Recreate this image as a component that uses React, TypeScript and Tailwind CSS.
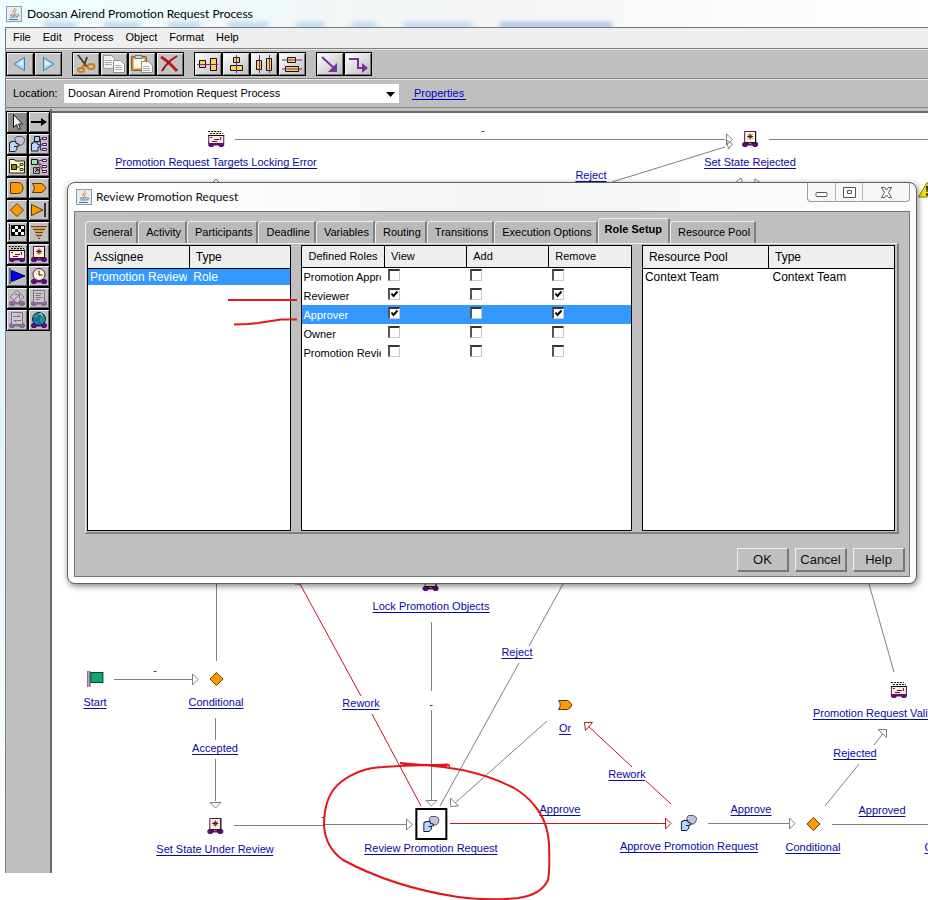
import type { ReactNode } from "react";

const Svg = ({ children }: { children: ReactNode }) => (
  <svg width="18" height="18" viewBox="0 0 18 18" fill="none" aria-hidden="true">
    {children}
  </svg>
);

const JavaIcon = () => (
  <svg width="16" height="16" viewBox="0 0 16 16" fill="none" aria-hidden="true" className="shrink-0">
    <rect x="0.5" y="0.5" width="15" height="15" fill="#e6edf3" stroke="#8f9ba8" />
    <path d="M9 2C9 4 6 4.500 7 7M10.500 4C8 5 9.500 6 8.500 8" stroke="#d97b35" />
    <path d="M4 9h6.500M4.500 11h5M3 13.500h9M11 8.500c3 0 2 2.500-1 2.500" stroke="#4e7698" />
  </svg>
);

const Wheels = () => (
  <path d="M1 13.500 2.500 12h4L8 14h2l1.500-2h4l1.500 1.500v2L15.500 17h-3L11 15.500H7L5.500 17h-3L1 15.500z" fill="#5b0f73" />
);

const Robot = () => (
  <Svg>
    <Wheels />
    <path d="M3.500 1.500h11v11h-11z" fill="#fff6c4" stroke="#5b0f73" />
    <path d="M14.500 1v12H4" stroke="#1a0620" />
    <path d="M9 3.500v6M6 6.500h6M7 4.500l4 4M11 4.500l-4 4" stroke="#45104f" />
  </Svg>
);

const Mail = () => (
  <Svg>
    <Wheels />
    <path d="M1 1.500h13M3 3.500h13" stroke="#111" strokeDasharray="2 1" />
    <rect x="1.500" y="5.500" width="15" height="8" fill="#fff0d0" stroke="#5b0f73" />
    <path d="M1 5.500h16" stroke="#000" />
    <path d="M3 7.500h2M13.500 7v3M7 9.500h5M5 11.500h5" stroke="#5b0f73" />
  </Svg>
);

const People = () => (
  <Svg>
    <path d="M7 3.500 8.500 1.500h5l3 2v2l-1 3-2 1.500h-3L7 8z" fill="#c3c3dd" stroke="#55556e" />
    <path d="M1.500 7.500h1.500v-1h5v2l3 .500v2H9v3l-2 2.500H1.500z" fill="#b9d5f7" stroke="#10243f" />
    <path d="M6 11.500h3" stroke="#10243f" />
  </Svg>
);

const Diamond = () => (
  <Svg>
    <path d="M9 2.500 15.500 9 9 15.500 2.500 9z" fill="#ff9900" stroke="#6b3f00" />
  </Svg>
);

const OrGate = () => (
  <Svg>
    <path d="M2.500 4.500h9q3 1.500 4.500 4.500-1.500 3-4.500 4.500h-9q3.500-4.500 0-9z" fill="#ff9900" stroke="#5c3700" />
  </Svg>
);

const AndGate = () => (
  <Svg>
    <path d="M2.500 3.500h8q4.500 1 4.500 5.500t-4.500 5.500h-8z" fill="#ff9900" stroke="#5c3700" />
  </Svg>
);

const StartFlag = () => (
  <Svg>
    <path d="M1.500 1v16M3.500 1v16" stroke="#3e1b55" />
    <rect x="4.500" y="2.500" width="12" height="10" fill="#0aa878" stroke="#063c2c" />
  </Svg>
);

const FadedRobot = ({ children }: { children: ReactNode }) => (
  <Svg>
    <g opacity="0.5">
      <Wheels />
      {children}
    </g>
  </Svg>
);

const paletteItems: { name: string; icon: ReactNode }[] = [
  { name: "Select", icon: <Svg><path d="M5.500 1.500v13l3-3 2 5 2-1-2-4.500h4z" fill="#f4f4f4" stroke="#111" /></Svg> },
  { name: "Link", icon: <Svg><path d="M1 9h11" stroke="#000" strokeWidth="2" /><path d="M11 5l6 4-6 4z" fill="#000" /></Svg> },
  { name: "Activity", icon: <People /> },
  {
    name: "Ad hoc",
    icon: (
      <Svg>
        <path d="M8 4h4M10.500 4v11h2M10 9.500h3" stroke="#5b2a78" />
        <path d="M12.500 2.500h4v2h-4zM12.500 8.500h4v2h-4zM12.500 13.500h4v2h-4z" fill="#eee" stroke="#5b0f73" />
        <path d="M4.500 1.500h5v5h-5z" fill="#9fe0b9" stroke="#113" />
        <path d="M1.500 8.500H3V7h4v2l3 1v2H8v4H1.500z" fill="#b9d5f7" stroke="#10243f" />
      </Svg>
    ),
  },
  {
    name: "Block",
    icon: (
      <Svg>
        <path d="M1.500 2.500h5l1 1.500h9v12h-15z" fill="#fff3c8" stroke="#221" />
        <path d="M3.500 7.500h5v5h-5z" fill="#8a7a2c" stroke="#110" />
        <path d="M9 10h3M12 6.500h3v2h-3zM12 11.500h3v2h-3z" stroke="#431" />
      </Svg>
    ),
  },
  {
    name: "Proxy",
    icon: (
      <Svg>
        <path d="M8 4l5-1M8 5l5 4M8 6l5 8" stroke="#5b2a78" />
        <path d="M1.500 2.500h6v5h-6z" fill="#9fe0b9" stroke="#111" />
        <path d="M12.500 2.500h4v2h-4zM12.500 8.500h4v2h-4zM12.500 13.500h4v2h-4z" fill="#eee" stroke="#5b0f73" />
        <path d="M3.500 10.500h6v6h-6z" fill="#bbb" stroke="#333" />
        <path d="M5 15l3-3M5.500 12H8v2.500" stroke="#000" />
      </Svg>
    ),
  },
  { name: "And", icon: <AndGate /> },
  { name: "Or", icon: <OrGate /> },
  { name: "Conditional", icon: <Diamond /> },
  { name: "Threshold", icon: <Svg><path d="M1.500 3.500 13 9 1.500 14.500z" fill="#ff9900" stroke="#5c3700" /><path d="M15 2v14" stroke="#333" strokeWidth="2" /></Svg> },
  {
    name: "End",
    icon: (
      <Svg>
        <path d="M1.500 1v16" stroke="#222" />
        <path d="M3.500 2.500h13v10h-13z" fill="#fff" stroke="#000" />
        <path d="M4 3h3v3H4zM10 3h3v3h-3zM7 6h3v3H7zM13 6h3v3h-3zM4 9h3v3H4zM10 9h3v3h-3z" fill="#000" />
      </Svg>
    ),
  },
  { name: "Ground", icon: <Svg><path d="M1 3.500h16M3 6.500h12M5 9.500h8M6 12.500h6M8 15.500h2" stroke="#7a3c00" /><path d="M2 5h14M4 8h10M6 11h6M7 14h4" stroke="#d18b33" /></Svg> },
  { name: "Notification robot", icon: <Mail /> },
  { name: "Method robot", icon: <Robot /> },
  { name: "Milestone", icon: <Svg><path d="M2 1v16" stroke="#001b55" /><path d="M3.500 3.500v11L17 9z" fill="#0000ee" stroke="#000050" /></Svg> },
  {
    name: "Timer robot",
    icon: (
      <Svg>
        <Wheels />
        <circle cx="9" cy="7.500" r="6" fill="#fff3d0" stroke="#45104f" />
        <path d="M9 3.500V8h3.500" stroke="#111" />
      </Svg>
    ),
  },
  {
    name: "Launch robot",
    icon: (
      <FadedRobot>
        <path d="M9 1.500 16 8l-7 6-7-6z" fill="#ddd0dd" stroke="#5b0f73" />
        <path d="M6 11l5-5M7 5.500h4.500V10" stroke="#333" />
      </FadedRobot>
    ),
  },
  {
    name: "Script robot",
    icon: (
      <FadedRobot>
        <path d="M3.500 1.500h11v12h-11z" fill="#ddd0dd" stroke="#5b0f73" />
        <path d="M5.500 4.500h7M5.500 6.500h5M5.500 8.500h7M5.500 10.500h4" stroke="#333" />
      </FadedRobot>
    ),
  },
  {
    name: "Sync robot",
    icon: (
      <FadedRobot>
        <path d="M3.500 1.500h11v12h-11z" fill="#ddd0dd" stroke="#5b0f73" />
        <path d="M5 5.500h7l-2-2M13 9.500H6l2 2" stroke="#333" />
      </FadedRobot>
    ),
  },
  {
    name: "URL robot",
    icon: (
      <Svg>
        <Wheels />
        <circle cx="9" cy="8" r="6.500" fill="#1668c7" stroke="#06244d" />
        <path d="M4 4.500 8 2l1 2-2 3H3zM10 6l4-1 1 4-3 4-2-3zM4 10l3 1v3z" fill="#22a35a" />
        <path d="M9 3l3-.500M11 4l2 .500" stroke="#d6efff" />
      </Svg>
    ),
  },
];

const ToolSvg = ({ children }: { children: ReactNode }) => (
  <svg width="24" height="20" viewBox="0 0 24 20" fill="none" aria-hidden="true">
    {children}
  </svg>
);

const toolbarGroups: { name: string; light?: boolean; icon: ReactNode }[][] = [
  [
    { name: "Back", icon: <ToolSvg><path d="M16.500 3.500v13L6 10z" fill="#a5ddf7" stroke="#2d88b8" /><path d="M15 6v6l-5-2z" fill="#e2f6ff" /></ToolSvg> },
    { name: "Forward", icon: <ToolSvg><path d="M7.500 3.500v13L18 10z" fill="#a5ddf7" stroke="#2d88b8" /><path d="M9 6v6l5-2z" fill="#e2f6ff" /></ToolSvg> },
  ],
  [
    {
      name: "Cut",
      icon: (
        <ToolSvg>
          <path d="M4 1l9 12M13 3l-3 9" stroke="#4a4038" strokeWidth="2" />
          <path d="M10 10l-2 5" stroke="#c87412" strokeWidth="2" />
          <ellipse cx="7" cy="16" rx="3" ry="2" stroke="#d07d14" strokeWidth="2" />
          <ellipse cx="17" cy="12.500" rx="3.500" ry="2.500" stroke="#d07d14" strokeWidth="2" />
        </ToolSvg>
      ),
    },
    {
      name: "Copy",
      icon: (
        <ToolSvg>
          <path d="M1.500 1.500h8l3 3v10h-11z" fill="#f0f0ee" stroke="#999" />
          <path d="M3 6.500h7M3 8.500h7M3 10.500h7" stroke="#a9a9a9" />
          <path d="M11.500 6.500h7l4 4v8h-11z" fill="#fafaf8" stroke="#8c8c88" />
          <path d="M13 11.500h6M13 13.500h7M13 15.500h7" stroke="#a9a9a9" />
        </ToolSvg>
      ),
    },
    {
      name: "Paste",
      icon: (
        <ToolSvg>
          <rect x="1.500" y="2.500" width="15" height="14" rx="1" fill="#c98b34" stroke="#8d5b17" />
          <path d="M3.500 4.500h11v10h-11z" fill="#fdf7e6" />
          <path d="M5 1.500h7v3H5z" fill="#d7d0c0" stroke="#776" />
          <path d="M11.500 7.500h7l4 4v7h-11z" fill="#fafaf8" stroke="#8c8c88" />
          <path d="M13 12.500h6M13 14.500h7M13 16.500h7" stroke="#a9a9a9" />
        </ToolSvg>
      ),
    },
    { name: "Delete", icon: <ToolSvg><path d="M3 3q6 3 16 14" stroke="#c01818" strokeWidth="3" /><path d="M19 2Q9 8 4 17" stroke="#a50f0f" strokeWidth="2" /></ToolSvg> },
  ],
  [
    { name: "Align middle", light: true, icon: <ToolSvg><path d="M3.500 6.500h6v7h-6zM14.500 4.500h6v12h-6z" fill="#ffd24d" stroke="#111" /><path d="M1 10.500h21" stroke="#7a1f9e" /></ToolSvg> },
    { name: "Align center", light: true, icon: <ToolSvg><path d="M9.500 3.500h6v5h-6zM6.500 11.500h12v5h-12z" fill="#ffd24d" stroke="#111" /><path d="M12.500 1v18" stroke="#7a1f9e" /></ToolSvg> },
    { name: "Distribute across", light: true, icon: <ToolSvg><path d="M4.500 6.500h5v9h-5zM14.500 4.500h5v12h-5z" fill="#ffd24d" stroke="#111" /><path d="M7.500 1v18M17.500 1v18" stroke="#7a1f9e" /></ToolSvg> },
    { name: "Distribute down", light: true, icon: <ToolSvg><path d="M7.500 3.500h8v5h-8zM5.500 12.500h13v5h-13z" fill="#ffd24d" stroke="#111" /><path d="M2 6h20M2 15h20" stroke="#7a1f9e" /></ToolSvg> },
  ],
  [
    { name: "Straight link", light: true, icon: <ToolSvg><path d="M4 3l13 12" stroke="#7b2fa5" strokeWidth="2" /><path d="M19 9v9h-9z" fill="#7b2fa5" /></ToolSvg> },
    { name: "Stepped link", light: true, icon: <ToolSvg><path d="M3 5h9v9h5" stroke="#7b2fa5" strokeWidth="2" /><path d="M16 9l6 5-6 5z" fill="#7b2fa5" /></ToolSvg> },
  ],
];

const menus = ["File", "Edit", "Process", "Object", "Format", "Help"];

// x is the centre of the node, y the top of its icon
const nodes: { x: number; y: number; label: string; icon: ReactNode; selected?: boolean }[] = [
  { x: 164, y: 17, label: "Promotion Request Targets Locking Error", icon: <Mail /> },
  { x: 698, y: 17, label: "Set State Rejected", icon: <Robot /> },
  { x: 379, y: 461, label: "Lock Promotion Objects", icon: <Robot /> },
  { x: 43, y: 557, label: "Start", icon: <StartFlag /> },
  { x: 164, y: 557, label: "Conditional", icon: <Diamond /> },
  { x: 163, y: 704, label: "Set State Under Review", icon: <Robot /> },
  { x: 379, y: 695, label: "Review Promotion Request", icon: <People />, selected: true },
  { x: 513, y: 583, label: "Or", icon: <OrGate /> },
  { x: 637, y: 701, label: "Approve Promotion Request", icon: <People /> },
  { x: 761, y: 702, label: "Conditional", icon: <Diamond /> },
  { x: 847, y: 568, label: "Promotion Request Validation Error", icon: <Mail /> },
  { x: 900, y: 702, label: "Conditional", icon: <Diamond /> },
];

const edgeLabels: { x: number; y: number; label: string }[] = [
  { x: 431, y: 11, label: "-" },
  { x: 539, y: 56, label: "Reject" },
  { x: 465, y: 533, label: "Reject" },
  { x: 309, y: 584, label: "Rework" },
  { x: 379, y: 585, label: "-" },
  { x: 103, y: 551, label: "-" },
  { x: 271, y: 697, label: "-" },
  { x: 446, y: 660, label: "-" },
  { x: 163, y: 629, label: "Accepted" },
  { x: 508, y: 690, label: "Approve" },
  { x: 575, y: 655, label: "Rework" },
  { x: 699, y: 690, label: "Approve" },
  { x: 803, y: 634, label: "Rejected" },
  { x: 830, y: 691, label: "Approved" },
];

const Edges = () => (
  <svg className="absolute top-0 left-0" width="876" height="760" viewBox="52 113 876 760" fill="none" aria-hidden="true">
    <g stroke="#808080">
      <path d="M235 139.500h490M769 139.500h159M612 182l113-35" />
      <path d="M216.500 583v78M114 679.500h78M215.500 718v22M215.500 759v42M234 825.500h90M324 824.500h82" />
      <path d="M431.500 622v69M431.500 710v90M563 584l-34 62M519 663 440 806M547 721l-92 82" />
      <path d="M708 823.500h81M832 824.500h96M825 806l34-42M874 745l11-14M869 584l25 88" />
    </g>
    <g stroke="#808080">
      <path d="M726.500 134v11l6-5.500zM726.500 140l2 9 4-5zM210 185l6-6 6 6M735 183l6-5 2 6M754 185l1-6 6 4" />
      <path d="M192.500 674v11l5.500-5.500zM210 802.500h11l-5.500 5.500zM406.500 819v11l6-5.500zM426 800.500h11l-5.500 5.500z" fill="#fff" />
      <path d="M450.500 798v8.500l8-.500zM789.500 818v11l5.500-5.500zM878 729.500h8.500v8z" fill="#fff" />
    </g>
    <g stroke="#c01722">
      <path d="M300 584l61 112M372 714l49 92M450 823.500h216M671 804l-25-23M632 767l-46-43" />
      <path d="M665.500 818v11l5.500-5.500zM584.500 722.500h8l-7 8zM295 584h6l-2-3z" fill="#fff" />
    </g>
  </svg>
);

const LabelLink = ({ children }: { children: ReactNode }) => (
  <a href="#" className="block border-b border-[#0a0aa0] text-[11px] leading-3 whitespace-nowrap text-[#0a0aa0]">
    {children}
  </a>
);

const Check = ({ label, checked }: { label: string; checked: boolean }) => (
  <span className="grid size-3">
    <input
      type="checkbox"
      aria-label={label}
      defaultChecked={checked}
      className="peer col-start-1 row-start-1 size-3 appearance-none border border-t-2 border-l-2 border-[#c8c8c8] border-t-[#333] border-l-[#555] bg-white"
    />
    <svg viewBox="0 0 12 12" className="pointer-events-none invisible col-start-1 row-start-1 peer-checked:visible" fill="none" aria-hidden="true">
      <path d="M3.500 5.500 5.500 8l4-4.500" stroke="#000" strokeWidth="2" />
    </svg>
  </span>
);

const roles = [
  { name: "Promotion Approvers", view: false, add: false, remove: false },
  { name: "Reviewer", view: true, add: false, remove: true },
  { name: "Approver", view: true, add: false, remove: true, selected: true },
  { name: "Owner", view: false, add: false, remove: false },
  { name: "Promotion Reviewers", view: false, add: false, remove: false },
];

const tabs = [
  "General",
  "Activity",
  "Participants",
  "Deadline",
  "Variables",
  "Routing",
  "Transitions",
  "Execution Options",
  "Role Setup",
  "Resource Pool",
];

const headCell = "border-b border-black bg-[#eee] text-left font-normal pl-1.5";

const Dialog = () => (
  <section
    role="dialog"
    aria-label="Review Promotion Request"
    className="absolute top-[69px] right-[11px] left-[15px] rounded-lg border border-[#606060] bg-[#fbfcfc] px-1.5 pb-1.5 shadow-[1px_2px_6px_rgba(0,0,0,0.5)]"
  >
    <div className="flex h-7 items-start justify-between bg-linear-to-r from-white via-[#f4f5f5] to-[#fbfcfc] pl-0.5">
      <div className="flex h-7 items-center gap-1">
        <JavaIcon />
        <h2 className="font-[Lato,sans-serif] text-[12px] text-[#111]">Review Promotion Request</h2>
      </div>
      <div className="flex h-[19px] rounded-b border border-t-0 border-[#9a9a9a] bg-[#f6f7f7]">
        <button aria-label="Minimize" className="flex w-7 items-center justify-center border-r border-[#b5b5b5]">
          <svg width="13" height="13" viewBox="0 0 13 13" fill="none"><rect x="1" y="6.500" width="11" height="4" rx="1" fill="#fff" stroke="#555" /></svg>
        </button>
        <button aria-label="Maximize" className="flex w-[27px] items-center justify-center border-r border-[#b5b5b5]">
          <svg width="13" height="13" viewBox="0 0 13 13" fill="none"><path d="M.5 1.500h12v10H.5zM4.500 4.500h4v3h-4z" fill="#fff" stroke="#555" /></svg>
        </button>
        <button aria-label="Close" className="flex w-[46px] items-center justify-center">
          <svg width="13" height="13" viewBox="0 0 13 13" fill="none"><path d="M1.500 1.500h3l2 2.500 2-2.500h3L8.500 6.500l3 5h-3l-2-2.500-2 2.500h-3l3-5z" fill="#fff" stroke="#555" /></svg>
        </button>
      </div>
    </div>

    <div className="border border-[#777] bg-[#bfbfbf] px-2.5 pt-1.5">
      <div role="tablist" className="flex items-end">
        {tabs.map((tab) =>
          tab === "Role Setup" ? (
            <button key={tab} role="tab" aria-selected="true" className="h-[25px] rounded-tl border-t border-r-2 border-l border-[#eee] border-r-[#808080] px-1.5 pb-1 text-[11px] font-bold whitespace-nowrap">
              {tab}
            </button>
          ) : (
            <button key={tab} role="tab" aria-selected="false" className="h-[22px] rounded-tl border-t border-r-2 border-l border-[#eee] border-r-[#808080] bg-[#bababa] pr-1 pl-[7px] text-[11px] whitespace-nowrap">
              {tab}
            </button>
          ),
        )}
      </div>
      <div className="flex h-[291px] gap-2.5 border-t border-r-2 border-b-2 border-l border-[#eee] border-r-[#808080] border-b-[#808080] p-px">
        <div className="flex-[204] border border-black bg-white">
          <table className="w-full table-fixed border-collapse text-[12px]">
            <thead>
              <tr className="h-[22px]">
                <th className={`${headCell} w-1/2 border-r`}>Assignee</th>
                <th className={headCell}>Type</th>
              </tr>
            </thead>
            <tbody>
              <tr className="h-4 bg-[#3399ff] leading-4 text-white">
                <td className="pl-0.5">
                  <div className="w-[97px] overflow-hidden whitespace-nowrap">Promotion Reviewers</div>
                </td>
                <td className="pl-1">Role</td>
              </tr>
            </tbody>
          </table>
        </div>
        <div className="flex-[331] border border-black bg-white">
          <table className="w-full table-fixed border-collapse text-[11px]">
            <thead>
              <tr className="h-[21px]">
                <th className={`${headCell} w-1/4 border-r`}>Defined Roles</th>
                <th className={`${headCell} w-1/4 border-r`}>View</th>
                <th className={`${headCell} w-1/4 border-r`}>Add</th>
                <th className={`${headCell} w-1/4`}>Remove</th>
              </tr>
            </thead>
            <tbody>
              {roles.map((role) => (
                <tr key={role.name} className={role.selected ? "h-[19px] bg-[#3399ff] text-white" : "h-[19px]"}>
                  <td className="pl-px">
                    <div className="w-[78px] overflow-hidden leading-4 whitespace-nowrap">{role.name}</div>
                  </td>
                  <td className="pb-1 pl-[3px]"><Check label={`${role.name} view`} checked={role.view} /></td>
                  <td className="pb-1 pl-[3px]"><Check label={`${role.name} add`} checked={role.add} /></td>
                  <td className="pb-1 pl-[3px]"><Check label={`${role.name} remove`} checked={role.remove} /></td>
                </tr>
              ))}
            </tbody>
          </table>
        </div>
        <div className="mr-px flex-[253] border border-black bg-white">
          <table className="w-full table-fixed border-collapse text-[12px]">
            <thead>
              <tr className="h-[22px]">
                <th className={`${headCell} w-1/2 border-r`}>Resource Pool</th>
                <th className={headCell}>Type</th>
              </tr>
            </thead>
            <tbody>
              <tr className="h-4 leading-4">
                <td className="pl-0.5">Context Team</td>
                <td className="pl-1">Context Team</td>
              </tr>
            </tbody>
          </table>
        </div>
      </div>
      <div className="-mr-1.5 flex justify-end gap-1.5 pt-3.5 pb-1">
        {["OK", "Cancel", "Help"].map((name) => (
          <button key={name} className="h-6 w-[52px] border border-r-2 border-b-2 border-[#eee] border-r-[#777] border-b-[#777] text-[13px] text-[#111]">
            {name}
          </button>
        ))}
      </div>
    </div>
  </section>
);

const App = () => {
  return (
    <main className="relative min-h-screen overflow-hidden bg-white font-['Liberation_Sans',Arial,sans-serif] text-black">
      <div className="bg-linear-to-b from-[#effcff] via-[#dff4fa] to-white pl-[5px]">
        <header className="relative -ml-[5px] flex h-[27px] items-center gap-[5px] overflow-hidden bg-linear-to-r from-[#effdff] via-[#f3f5f5] to-white pl-1.5">
          {/* window behind, seen through the glass title bar */}
          <div className="absolute top-[22px] left-11 flex gap-7 blur-[2px]" aria-hidden="true">
            <span className="h-1.5 w-8 bg-[#bcd9ee]" />
            <span className="h-1.5 w-9 bg-[#bcd9ee]" />
            <span className="h-1.5 w-8 bg-[#bcd9ee]" />
            <span className="h-1.5 w-10 bg-[#bcd9ee]" />
            <span className="h-1.5 w-7 bg-[#bcd9ee]" />
            <span className="h-1.5 w-6 bg-[#bcd9ee]" />
            <span className="h-1.5 w-17 bg-[#bcd9ee]" />
            <span className="h-1.5 w-28 bg-[#a9c4e4]" />
          </div>
          <JavaIcon />
          <h1 className="relative font-[Lato,sans-serif] text-[12px] whitespace-nowrap">Doosan Airend Promotion Request Process</h1>
        </header>

        <nav className="flex h-[21px] items-center gap-3 border-t border-l border-[#70787c] bg-[#efefef] pb-0.5 pl-[7px]">
          {menus.map((menu) => (
            <button key={menu} className="text-[11px]">{menu}</button>
          ))}
        </nav>

        <div className="flex h-[30px] items-center gap-2.5 border-t border-l border-[#808080] bg-[#bfbfbf] shadow-[inset_0_1px_#e8e8e8]">
          {toolbarGroups.map((group) => (
            <div key={group[0].name} className="flex">
              {group.map((tool) => (
                <button
                  key={tool.name}
                  aria-label={tool.name}
                  className={`flex h-6 w-7 items-center justify-center border border-black shadow-[inset_1px_1px_#eee,inset_-1px_-1px_#777] ${tool.light ? "bg-linear-to-br from-white to-[#bdbdbd]" : "bg-[#c4c4c4]"}`}
                >
                  {tool.icon}
                </button>
              ))}
            </div>
          ))}
        </div>

        <div className="flex h-[30px] items-center border-y border-l border-[#808080] bg-[#bfbfbf] pl-[7px] text-[11px] shadow-[inset_0_1px_#e8e8e8]">
          <label htmlFor="location" className="w-[51px]">Location:</label>
          <div className="relative w-[335px]">
            <select id="location" className="block h-[19px] w-full appearance-none bg-white pl-1">
              <option>Doosan Airend Promotion Request Process</option>
            </select>
            <svg className="pointer-events-none absolute top-[8px] right-1" width="9" height="5" viewBox="0 0 9 5" aria-hidden="true">
              <path d="M0 0h9L4.500 5z" fill="#000" />
            </svg>
          </div>
          <a href="#" className="ml-[13px] border-b border-[#0000cc] px-0.5 leading-3 text-[#0000cc]">Properties</a>
        </div>

        <div className="flex border-l border-[#808080] bg-[#bfbfbf] pt-px">
          <aside className="w-[46px] shrink-0 border-r-2 border-[#6a6a6a] pt-0.5">
            <div className="grid grid-cols-2">
              {paletteItems.map((item, i) => (
                <button
                  key={item.name}
                  aria-label={item.name}
                  className={`flex h-[22px] w-[22px] items-center justify-center border border-black shadow-[inset_1px_1px_#eee,inset_-1px_-1px_#666] ${i === 0 ? "bg-[#8c8c8c]" : "bg-[#c0c0c0]"}`}
                >
                  {item.icon}
                </button>
              ))}
            </div>
          </aside>

          <div className="relative mt-0.5 h-[762px] min-w-0 flex-1 overflow-hidden border-t-2 border-[#6a6a6a] bg-white">
            <Edges />
            {nodes.map((node) => (
              <div key={`${node.label}-${node.x}`} className="absolute flex -translate-x-1/2 flex-col items-center" style={{ left: node.x, top: node.y }}>
                {node.selected ? (
                  <span className="mb-0.5 flex size-8 items-center justify-center border-2 border-black bg-white">{node.icon}</span>
                ) : (
                  <span className="mb-2">{node.icon}</span>
                )}
                <LabelLink>{node.label}</LabelLink>
              </div>
            ))}
            {edgeLabels.map((edge) => (
              <div key={`${edge.x}-${edge.y}`} className="absolute -translate-x-1/2" style={{ left: edge.x, top: edge.y }}>
                {edge.label === "-" ? (
                  <span className="block text-[11px] leading-3 text-[#0a0aa0]">-</span>
                ) : (
                  <LabelLink>{edge.label}</LabelLink>
                )}
              </div>
            ))}
            <svg className="absolute top-[69px] left-[866px]" width="18" height="16" viewBox="0 0 18 16" aria-hidden="true">
              <path d="M9 .500 17.500 15H.500z" fill="#f5e100" stroke="#8a7d00" />
              <path d="M8 4h2l-.500 6h-1zM8 11.500h2v2H8z" fill="#111" />
            </svg>
            <Dialog />
          </div>
        </div>
      </div>

      {/* hand-drawn red marks */}
      <svg className="pointer-events-none absolute top-0 left-0" width="928" height="900" viewBox="0 0 928 900" fill="none" stroke="#e3171b" strokeWidth="2" aria-hidden="true">
        <path d="M228 300h69M234 324.500l14-.500 10-1 23-3.500h16" />
        <path d="M400 763q17 3 47 1.500 3 1 2 2M400 763l34 3q45 4 80 22 12 7 20 17 14 16 15 40t-1 35q-7 15-30 18-30 3-60-1-65-10-115-37-18-13-19-35 0-30 17-43 18-14 42-15 35-3 64-1" />
      </svg>
    </main>
  );
};

export default App;
